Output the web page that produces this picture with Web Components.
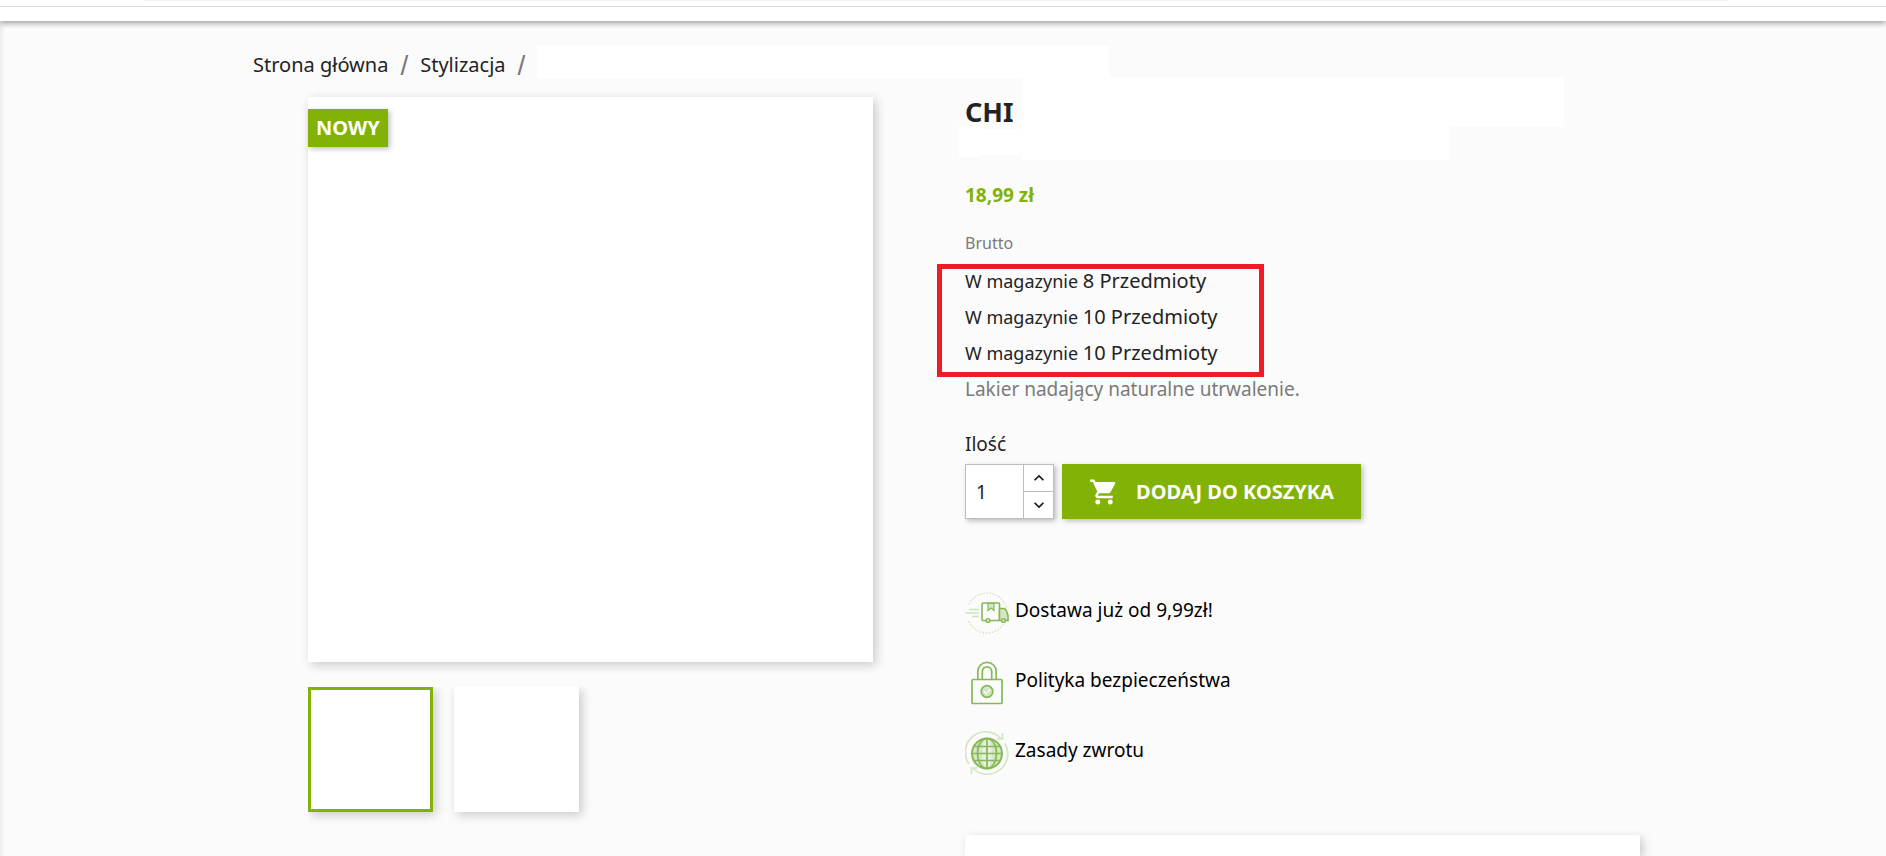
<!DOCTYPE html>
<html lang="pl">
<head>
<meta charset="utf-8">
<meta name="viewport" content="width=device-width, initial-scale=1">
<title>CHI</title>
<style>
    html
    {
        --green: #82b205;
        --dark: #232323;
        --grey: #7a7a7a;
        --shadow: 3px 3px 10px rgba(0, 0, 0, 0.2);
    }
    body
    {
        margin: 0;
        background: #fbfbfb;
        color: var(--dark);
        font-family: "Noto Sans", sans-serif;
        font-size: 19px;
        line-height: 28px;
    }
</style>
</head>
<body>
<shop-page>
    <shop-header slot="header"></shop-header>
    <bread-crumbs slot="path">
        <a href="#home">Strona główna</a>
        <a href="#styling">Stylizacja</a>
    </bread-crumbs>
    <product-gallery slot="gallery" flag="NOWY" count="2"></product-gallery>
    <product-title>CHI</product-title>
    <product-price amount="18,99 zł">Brutto</product-price>
    <stock-list>
        <stock-item label="W magazynie">8 Przedmioty</stock-item>
        <stock-item label="W magazynie">10 Przedmioty</stock-item>
        <stock-item label="W magazynie">10 Przedmioty</stock-item>
    </stock-list>
    <product-description>Lakier nadający naturalne utrwalenie.</product-description>
    <add-to-cart label="Ilość">DODAJ DO KOSZYKA</add-to-cart>
    <reassurance-list>
        <reassurance-item icon="truck">Dostawa już od 9,99zł!</reassurance-item>
        <reassurance-item icon="lock">Polityka bezpieczeństwa</reassurance-item>
        <reassurance-item icon="globe">Zasady zwrotu</reassurance-item>
    </reassurance-list>
    <product-tabs></product-tabs>
</shop-page>

<script>
// base class, fills the shadow root from render()
class ShopElement extends HTMLElement
{
    connectedCallback()
    {
        if(this.shadowRoot) return;
        this.attachShadow({mode:"open"}).innerHTML = this.render();
        this.ready();
    }

    ready()
    {
    }
}

class ShopPage extends ShopElement
{
    render()
    {
        return `
        <style>
            :host
            {
                display: flex;
                flex-direction: column;
                min-height: 100vh;
            }
            main
            {
                flex: 1;
                display: flex;
                flex-direction: column;
                padding: 25px 16px 0;
                background: linear-gradient(to right, rgba(0, 0, 0, 0.06), transparent 5px);
            }
            .container
            {
                flex: 1;
                display: flex;
                flex-direction: column;
                width: 100%;
                max-width: 1394px;
                margin: 0 auto;
            }
            .product
            {
                flex: 1;
                display: grid;
                grid-template-columns: minmax(0, 565px) minmax(0, 675px);
                column-gap: 92px;
                justify-content: end;
                padding-top: 18px;
            }
            .info
            {
                display: flex;
                flex-direction: column;
            }
        </style>
        <slot name="header"></slot>
        <main>
            <div class="container">
                <slot name="path"></slot>
                <div class="product">
                    <slot name="gallery"></slot>
                    <div class="info"><slot></slot></div>
                </div>
            </div>
        </main>
        `
    }
}

class ShopHeader extends ShopElement
{
    render()
    {
        return `
        <style>
            :host
            {
                display: block;
                height: 21px;
                background: white;
                box-shadow: 0 2px 6px rgba(0, 0, 0, 0.4);
                position: relative;
            }
            .menu
            {
                height: 1px;
                margin: 0 158px 0 145px;
                background: #f1f1f1;
            }
            .line
            {
                height: 1px;
                margin-top: 5px;
                background: #dadada;
            }
        </style>
        <div class="menu"></div>
        <div class="line"></div>
        `
    }
}

class BreadCrumbs extends ShopElement
{
    render()
    {
        return `
        <style>
            :host
            {
                display: block;
            }
            nav
            {
                display: flex;
                align-items: center;
                height: 33px;
                padding-left: 7px;
                font-size: 20px;
                white-space: nowrap;
            }
            ::slotted(a)
            {
                padding-top: 4px;
                color: var(--dark);
                text-decoration: none;
            }
            ::slotted(a)::after
            {
                content: "/";
                margin: 0 12px;
                color: var(--grey);
                font-family: "Liberation Sans", sans-serif;
                font-size: 28px;
                line-height: 0;
                vertical-align: -3px;
            }
            .current
            {
                flex: 0 1 572px;
                height: 33px;
                background: white;
            }
        </style>
        <nav aria-label="breadcrumb"><slot></slot><span class="current"></span></nav>
        `
    }
}

class ProductGallery extends ShopElement
{
    render()
    {
        return `
        <style>
            :host
            {
                display: block;
            }
            .cover
            {
                position: relative;
                aspect-ratio: 1;
                background: white;
                box-shadow: var(--shadow);
            }
            .flag
            {
                position: absolute;
                top: 12px;
                left: 0;
                padding: 5px 8px;
                background: var(--green);
                color: white;
                font-size: 20px;
                font-weight: 700;
                box-shadow: 2px 2px 5px rgba(0, 0, 0, 0.25);
            }
            .thumbs
            {
                display: flex;
                gap: 21px;
                margin-top: 25px;
                padding-bottom: 16px;
                overflow: hidden;
            }
            button
            {
                width: 125px;
                height: 125px;
                padding: 0;
                border: 0;
                background: white;
                box-shadow: var(--shadow);
                cursor: pointer;
            }
            .selected
            {
                border: 3px solid var(--green);
            }
        </style>
        <div class="cover"><span class="flag">${this.getAttribute("flag")}</span></div>
        <div class="thumbs"></div>
        `
    }

    ready()
    {
        let thumbs = this.shadowRoot.querySelector(".thumbs");
        for(let i=0; i<Number(this.getAttribute("count")); i++)
        {
            let button = document.createElement("button");
            button.type = "button";
            if(i == 0)
            {
                button.classList.add("selected");
            }
            button.onclick = e =>
            {
                thumbs.querySelectorAll("button").forEach(el=>el.classList.remove("selected"));
                button.classList.add("selected");
            }
            thumbs.appendChild(button);
        }
    }
}

class ProductTitle extends ShopElement
{
    render()
    {
        return `
        <style>
            :host
            {
                display: block;
                position: relative;
                height: 63px;
            }
            h1
            {
                margin: 0;
                font-size: 27px;
                line-height: 30px;
                font-weight: 700;
            }
            /* white patches that lie over the rest of the name */
            span
            {
                position: absolute;
                background: white;
            }
            .a { left: 58px; top: -19px; width: 541px; height: 49px; }
            .b { left: 56px; top: 20px; width: 428px; height: 43px; }
            .c { left: -6px; top: 29px; width: 22px; height: 31px; }
            .d { left: 16px; top: 32px; width: 40px; height: 26px; }
        </style>
        <h1><slot></slot></h1>
        <span class="a"></span>
        <span class="b"></span>
        <span class="c"></span>
        <span class="d"></span>
        `
    }
}

class ProductPrice extends ShopElement
{
    render()
    {
        return `
        <style>
            :host
            {
                display: block;
                margin-top: 20px;
            }
            .price
            {
                color: var(--green);
                font-size: 19px;
                line-height: 30px;
                font-weight: 700;
            }
            .tax
            {
                margin-top: 21px;
                color: var(--grey);
                font-size: 16px;
                line-height: 24px;
            }
        </style>
        <div class="price">${this.getAttribute("amount")}</div>
        <div class="tax"><slot></slot></div>
        `
    }
}

class StockList extends ShopElement
{
    render()
    {
        return `
        <style>
            :host
            {
                display: block;
                position: relative;
                margin-top: 8px;
            }
            .frame
            {
                position: absolute;
                box-sizing: border-box;
                top: 1px;
                bottom: -6px;
                left: -28px;
                width: 327px;
                border: 5px solid #ee1c25;
                pointer-events: none;
            }
        </style>
        <slot></slot>
        <div class="frame"></div>
        `
    }
}

class StockItem extends ShopElement
{
    render()
    {
        return `
        <style>
            :host
            {
                display: block;
                font-size: 20px;
                line-height: 36px;
            }
            .label
            {
                font-size: 18px;
            }
        </style>
        <span class="label">${this.getAttribute("label")}</span><span class="label">&#32;</span><slot></slot>
        `
    }
}

class ProductDescription extends ShopElement
{
    render()
    {
        return `
        <style>
            :host
            {
                display: block;
                margin-top: 4px;
                color: var(--grey);
            }
            p
            {
                margin: 0;
            }
        </style>
        <p><slot></slot></p>
        `
    }
}

class AddToCart extends ShopElement
{
    render()
    {
        return `
        <style>
            :host
            {
                display: block;
                margin-top: 27px;
            }
            label
            {
                display: block;
                margin-bottom: 6px;
            }
            .row
            {
                display: flex;
                gap: 8px;
            }
            .qty
            {
                display: flex;
                box-sizing: border-box;
                width: 89px;
                height: 55px;
                border: 1px solid #bdbdbd;
                background: white;
                box-shadow: 2px 2px 5px rgba(0, 0, 0, 0.25);
            }
            input
            {
                flex: 1;
                min-width: 0;
                padding: 0 10px;
                border: 0;
                outline: 0;
                background: none;
                color: var(--dark);
                font: inherit;
            }
            .steps
            {
                display: flex;
                flex-direction: column;
                width: 29px;
                border-left: 1px solid #bdbdbd;
            }
            button
            {
                cursor: pointer;
                font: inherit;
            }
            .steps button
            {
                flex: 1;
                display: grid;
                place-items: center;
                padding: 0;
                border: 0;
                background: none;
            }
            .steps button + button
            {
                border-top: 1px solid #bdbdbd;
            }
            .steps svg
            {
                width: 20px;
                height: 20px;
                fill: #111;
            }
            .add
            {
                display: flex;
                align-items: center;
                gap: 17px;
                height: 55px;
                padding: 0 27px;
                border: 0;
                background: var(--green);
                color: white;
                font-size: 20px;
                font-weight: 700;
                white-space: nowrap;
                box-shadow: 2px 2px 5px rgba(0, 0, 0, 0.25);
            }
            .add svg
            {
                width: 30px;
                height: 30px;
                fill: white;
            }
        </style>
        <label for="qty">${this.getAttribute("label")}</label>
        <div class="row">
            <div class="qty">
                <input id="qty" type="text" inputmode="numeric" value="1">
                <div class="steps">
                    <button type="button" class="up"><svg viewBox="0 0 24 24"><path d="M7.4 15.4 12 10.8l4.6 4.6L18 14l-6-6-6 6z"/></svg></button>
                    <button type="button" class="down"><svg viewBox="0 0 24 24"><path d="M7.4 8.6 12 13.2l4.6-4.6L18 10l-6 6-6-6z"/></svg></button>
                </div>
            </div>
            <button type="button" class="add">
                <svg viewBox="0 0 24 24"><path d="M7 18c-1.1 0-1.99.9-1.99 2S5.9 22 7 22s2-.9 2-2-.9-2-2-2zM1 2v2h2l3.6 7.59-1.35 2.45c-.16.28-.25.61-.25.96 0 1.1.9 2 2 2h12v-2H7.42c-.14 0-.25-.11-.25-.25l.03-.12.9-1.63h7.45c.75 0 1.41-.41 1.75-1.03l3.58-6.49A1.003 1.003 0 0 0 20 4H5.21l-.94-2H1zm16 16c-1.1 0-1.99.9-1.99 2s.89 2 1.99 2 2-.9 2-2-.9-2-2-2z"/></svg>
                <slot></slot>
            </button>
        </div>
        `
    }

    ready()
    {
        let input = this.shadowRoot.querySelector("input");
        let step = n =>
        {
            input.value = Math.max(1, (parseInt(input.value) || 1) + n);
        }
        this.shadowRoot.querySelector(".up").onclick = e => step(1);
        this.shadowRoot.querySelector(".down").onclick = e => step(-1);
    }
}

class ReassuranceList extends ShopElement
{
    render()
    {
        return `
        <style>
            :host
            {
                display: flex;
                flex-direction: column;
                gap: 26px;
                margin-top: 72px;
            }
        </style>
        <slot></slot>
        `
    }
}

const icons =
{
    truck: `
        <circle cx="22" cy="22" r="20" fill="none" stroke="#cfe3bb" stroke-width="1.4" stroke-dasharray="1.4 1.7"/>
        <path d="M0 15h16v14H0zM36 17h8v14h-8z" fill="#fbfbfb"/>
        <path d="M4 18.5h10M0 22h14M7 25.5h7" fill="none" stroke="#cfe3bb" stroke-width="1.4"/>
        <rect x="17" y="12" width="17.5" height="17.5" rx="1" fill="#fbfbfb" stroke="#84b955" stroke-width="1.6"/>
        <path d="M34.5 17.5h4.500c1.5 0 2 1 2.5 2.5l1.5 4.500v5h-8.500z" fill="#d5e6c5" stroke="#84b955" stroke-width="1.6"/>
        <path d="M23 12.5h6v7l-3-2.5-3 2.5z" fill="#d5e6c5" stroke="#84b955" stroke-width="1.2"/>
        <circle cx="23" cy="29.5" r="1.9" fill="#d5e6c5" stroke="#84b955" stroke-width="1.4"/>
        <circle cx="38.5" cy="29.5" r="1.9" fill="#d5e6c5" stroke="#84b955" stroke-width="1.4"/>`,
    lock: `
        <g fill="none" stroke="#84b955" stroke-width="1.7">
            <rect x="7" y="18.5" width="30" height="24" rx="1"/>
            <path d="M12.8 18.5V10.5a9.2 9.2 0 0 1 18.4 0v8M17.3 18.5v-8a4.7 4.7 0 0 1 9.4 0v8"/>
            <circle cx="22" cy="30.5" r="5.8" fill="#d5e6c5"/>
        </g>
        <path d="M19 30.5l2.2 2.2 4-4.2" fill="none" stroke="#fbfbfb" stroke-width="1.2"/>`,
    globe: `
        <g fill="none" stroke="#d5e6c5" stroke-width="1.7">
            <path d="M4 33A20.5 20.5 0 0 1 36 7.5M40 12.5A20.5 20.5 0 0 1 8 37.5"/>
            <path d="M37.5 2v6h-6M6.5 43v-6h6"/>
        </g>
        <circle cx="22" cy="22.5" r="15" fill="#d5e6c5"/>
        <ellipse cx="22" cy="22.5" rx="5" ry="14" fill="#fbfbfb" opacity="0.5"/>
        <g fill="none" stroke="#84b955" stroke-width="1.7">
            <circle cx="22" cy="22.5" r="15" stroke-width="2"/>
            <ellipse cx="22" cy="22.5" rx="9.5" ry="15"/>
            <path d="M22 7.5v30M7 22.5h30M9.500 15.5h25M9.500 29.5h25"/>
        </g>`
}

class ReassuranceItem extends ShopElement
{
    render()
    {
        return `
        <style>
            :host
            {
                display: flex;
                gap: 6px;
                height: 44px;
                color: black;
                line-height: 38px;
            }
            svg
            {
                flex: none;
                width: 44px;
                height: 44px;
            }
        </style>
        <svg viewBox="0 0 44 44" aria-hidden="true">${icons[this.getAttribute("icon")]}</svg>
        <span><slot></slot></span>
        `
    }
}

class ProductTabs extends ShopElement
{
    render()
    {
        return `
        <style>
            :host
            {
                display: block;
                flex: 1;
                margin-top: 60px;
                background: white;
                box-shadow: var(--shadow);
            }
        </style>
        <slot></slot>
        `
    }
}

customElements.define("shop-page", ShopPage);
customElements.define("shop-header", ShopHeader);
customElements.define("bread-crumbs", BreadCrumbs);
customElements.define("product-gallery", ProductGallery);
customElements.define("product-title", ProductTitle);
customElements.define("product-price", ProductPrice);
customElements.define("stock-list", StockList);
customElements.define("stock-item", StockItem);
customElements.define("product-description", ProductDescription);
customElements.define("add-to-cart", AddToCart);
customElements.define("reassurance-list", ReassuranceList);
customElements.define("reassurance-item", ReassuranceItem);
customElements.define("product-tabs", ProductTabs);
</script>
</body>
</html>
